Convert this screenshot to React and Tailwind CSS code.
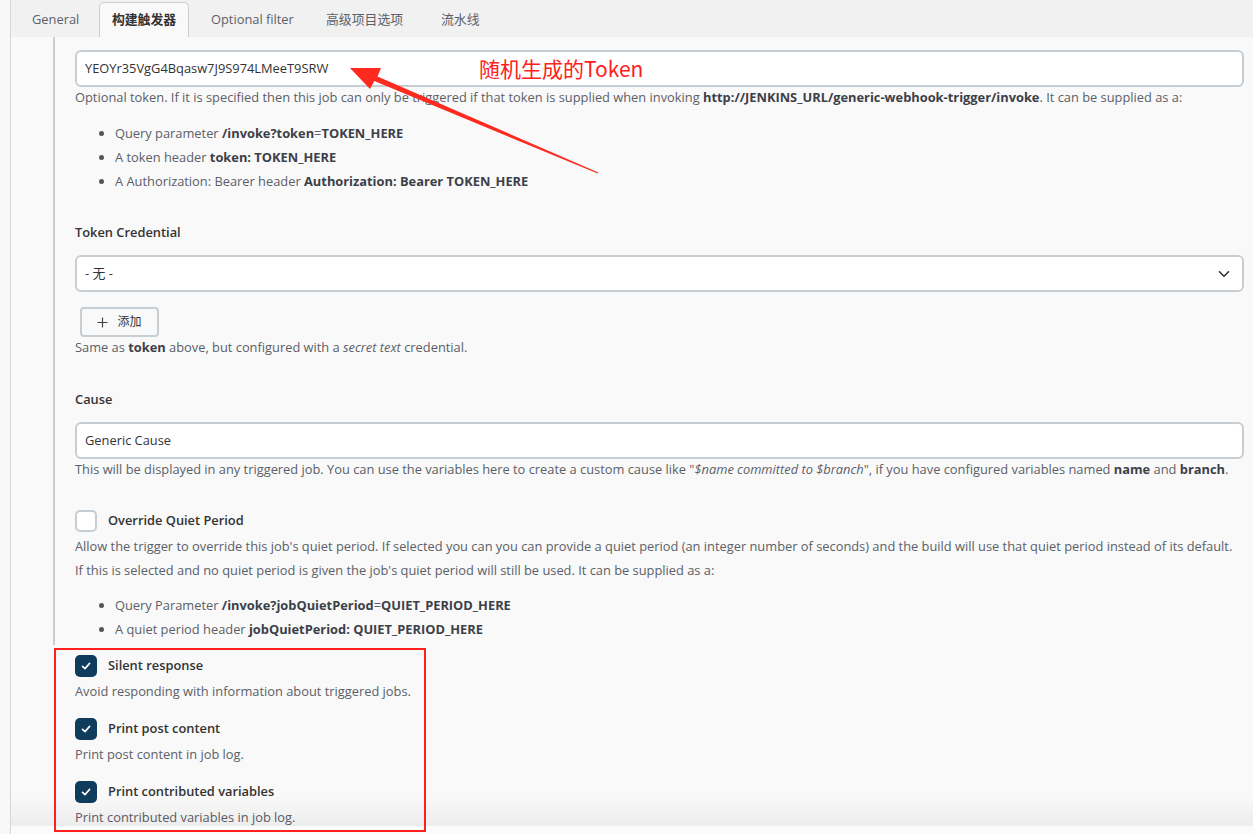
import React from 'react'

const font = { fontFamily: '"Open Sans", "Noto Sans CJK SC", sans-serif' }

const Check = ({ checked }) => (
  <span
    className={`flex items-center justify-center w-[22px] h-[22px] rounded-[5px] shrink-0 ${
      checked ? 'bg-[#0f3b5d]' : 'bg-white border-2 border-[#c6ced3]'
    }`}
  >
    {checked && (
      <svg width="12" height="12" viewBox="0 0 12 12">
        <path d="M2.5 6.3 L5 8.6 L9.6 3.4" fill="none" stroke="white" strokeWidth="1.6" strokeLinecap="round" strokeLinejoin="round" />
      </svg>
    )}
  </span>
)

const Bullets = ({ items, lh }) => (
  <ul className={`pl-[40px] list-disc text-[#5b6068] marker:text-[#555] ${lh}`}>
    {items.map((it, i) => (
      <li key={i}>{it}</li>
    ))}
  </ul>
)

const B = ({ children }) => <b className="font-bold text-[#3c4048]">{children}</b>

export default function App() {
  return (
    <div
      className="relative w-[1253px] h-[834px] overflow-hidden flex bg-[#f9f9f9] text-[12.85px] text-[#3c4048]"
      style={font}
    >
      {/* left strip */}
      <div className="w-[11px] shrink-0 bg-[#f8f8f8] border-r border-[#d3d8db]" />

      <div className="flex-1 flex flex-col">
        {/* Tabs */}
        <div className="h-[37px] bg-[#f1f1f1] flex items-end shrink-0 text-[#5b6068]">
          <div className="h-[35px] w-[88px] pl-[21px] flex items-center">General</div>
          <div className="h-[35px] w-[90px] flex items-center justify-center bg-[#f9f9f9] border border-b-0 border-[#c9ced2] rounded-t-[5px] font-semibold text-[#333]">
            构建触发器
          </div>
          <div className="h-[35px] w-[115px] pl-[22px] flex items-center">Optional filter</div>
          <div className="h-[35px] w-[115px] pl-[22px] flex items-center">高级项目选项</div>
          <div className="h-[35px] pl-[22px] flex items-center">流水线</div>
        </div>

        {/* Section with left rule */}
        <div className="ml-[42px] border-l-2 border-[#c8d0d5] pl-[20px] pr-[9px] pb-[4px]">
          <div className="mt-[13px] h-[37px] bg-white border-2 border-[#c6ced3] rounded-[6px] flex items-center px-[8px] text-[#333]">
            YEOYr35VgG4Bqasw7J9S974LMeeT9SRW
          </div>
          <p className="leading-[20px] text-[#5b6068]">
            Optional token. If it is specified then this job can only be triggered if that token is supplied when invoking{' '}
            <B>http://JENKINS_URL/generic-webhook-trigger/invoke</B>. It can be supplied as a:
          </p>
          <div className="mt-[14px]">
            <Bullets
              lh="leading-[24px]"
              items={[
                <>Query parameter <B>/invoke?token</B>=<B>TOKEN_HERE</B></>,
                <>A token header <B>token: TOKEN_HERE</B></>,
                <>A Authorization: Bearer header <B>Authorization: Bearer TOKEN_HERE</B></>,
              ]}
            />
          </div>

          <div className="mt-[29px] leading-[20px] font-semibold text-[#333]">Token Credential</div>
          <div className="mt-[13px] h-[37px] bg-white border-2 border-[#c6ced3] rounded-[6px] flex items-center justify-between px-[8px] text-[#333]">
            <span>- 无 -</span>
            <svg width="14" height="14" viewBox="0 0 14 14" className="mr-[3px]">
              <path d="M2.5 4.8 L7 9.2 L11.5 4.8" fill="none" stroke="#333" strokeWidth="1.6" strokeLinecap="round" strokeLinejoin="round" />
            </svg>
          </div>
          <button className="mt-[15px] ml-[5px] h-[30px] w-[79px] border-2 border-[#c6ced3] rounded-[4px] bg-[#f9f9f9] flex items-center justify-center gap-[9px] text-[12px] text-[#333]">
            <svg width="11" height="11" viewBox="0 0 11 11">
              <path d="M5.5 0.5 V10.5 M0.5 5.5 H10.5" stroke="#444" strokeWidth="1.2" />
            </svg>
            添加
          </button>
          <p className="leading-[20px] text-[#5b6068]">
            Same as <B>token</B> above, but configured with a <i>secret text</i> credential.
          </p>

          <div className="mt-[32px] leading-[20px] font-semibold text-[#333]">Cause</div>
          <div className="mt-[13px] h-[37px] bg-white border-2 border-[#c6ced3] rounded-[6px] flex items-center px-[8px] text-[#333]">
            Generic Cause
          </div>
          <p className="leading-[20px] text-[#5b6068]">
            This will be displayed in any triggered job. You can use the variables here to create a custom cause like "
            <i>$name committed to $branch</i>", if you have configured variables named <B>name</B> and <B>branch</B>.
          </p>

          <div className="mt-[31px] flex items-center gap-[11px]">
            <Check />
            <span className="font-semibold text-[#333]">Override Quiet Period</span>
          </div>
          <p className="mt-[2px] leading-[24px] text-[#5b6068] whitespace-nowrap">
            Allow the trigger to override this job's quiet period. If selected you can you can provide a quiet period (an integer number of seconds) and the build will use that quiet period instead of its default.
            <br />
            If this is selected and no quiet period is given the job's quiet period will still be used. It can be supplied as a:
          </p>
          <div className="mt-[12px]">
            <Bullets
              lh="leading-[23.5px]"
              items={[
                <>Query Parameter <B>/invoke?jobQuietPeriod</B>=<B>QUIET_PERIOD_HERE</B></>,
                <>A quiet period header <B>jobQuietPeriod: QUIET_PERIOD_HERE</B></>,
              ]}
            />
          </div>
        </div>

        {/* Checked options */}
        <div className="pl-[64px] pt-[10px]">
          {[
            ['Silent response', 'Avoid responding with information about triggered jobs.'],
            ['Print post content', 'Print post content in job log.'],
            ['Print contributed variables', 'Print contributed variables in job log.'],
          ].map(([label, help], i) => (
            <div key={label} className={i ? 'mt-[17px]' : ''}>
              <div className="flex items-center gap-[11px]">
                <Check checked />
                <span className="font-semibold text-[#333]">{label}</span>
              </div>
              <p className="mt-[4px] leading-[20px] text-[#5b6068]">{help}</p>
            </div>
          ))}
        </div>
      </div>

      {/* bottom bar shadow */}
      <div className="absolute left-[11px] right-0 top-[796px] h-[30px] bg-gradient-to-b from-transparent to-black/[0.05]" />
      <div className="absolute left-[11px] right-0 top-[826px] h-[8px] bg-[#fbfbfb]" />

      {/* annotation box */}
      <div className="absolute left-[54px] top-[648px] w-[372px] h-[184px] border-2 border-[#ff1f1f]" />

      {/* annotation arrow */}
      <svg className="absolute left-0 top-0 pointer-events-none" width="1253" height="834">
        <polygon
          points="350,68 381,68 377.5,76.5 598.3,172.4 597.7,173.6 374.3,81 370,89"
          fill="#ff2a1f"
        />
      </svg>
      <div
        className="absolute left-[479px] top-[54px] text-[21px] leading-[28px] text-[#ff2020]"
        style={{ fontFamily: '"Noto Sans CJK SC", "Noto Sans", sans-serif' }}
      >
        随机生成的Token
      </div>
    </div>
  )
}
